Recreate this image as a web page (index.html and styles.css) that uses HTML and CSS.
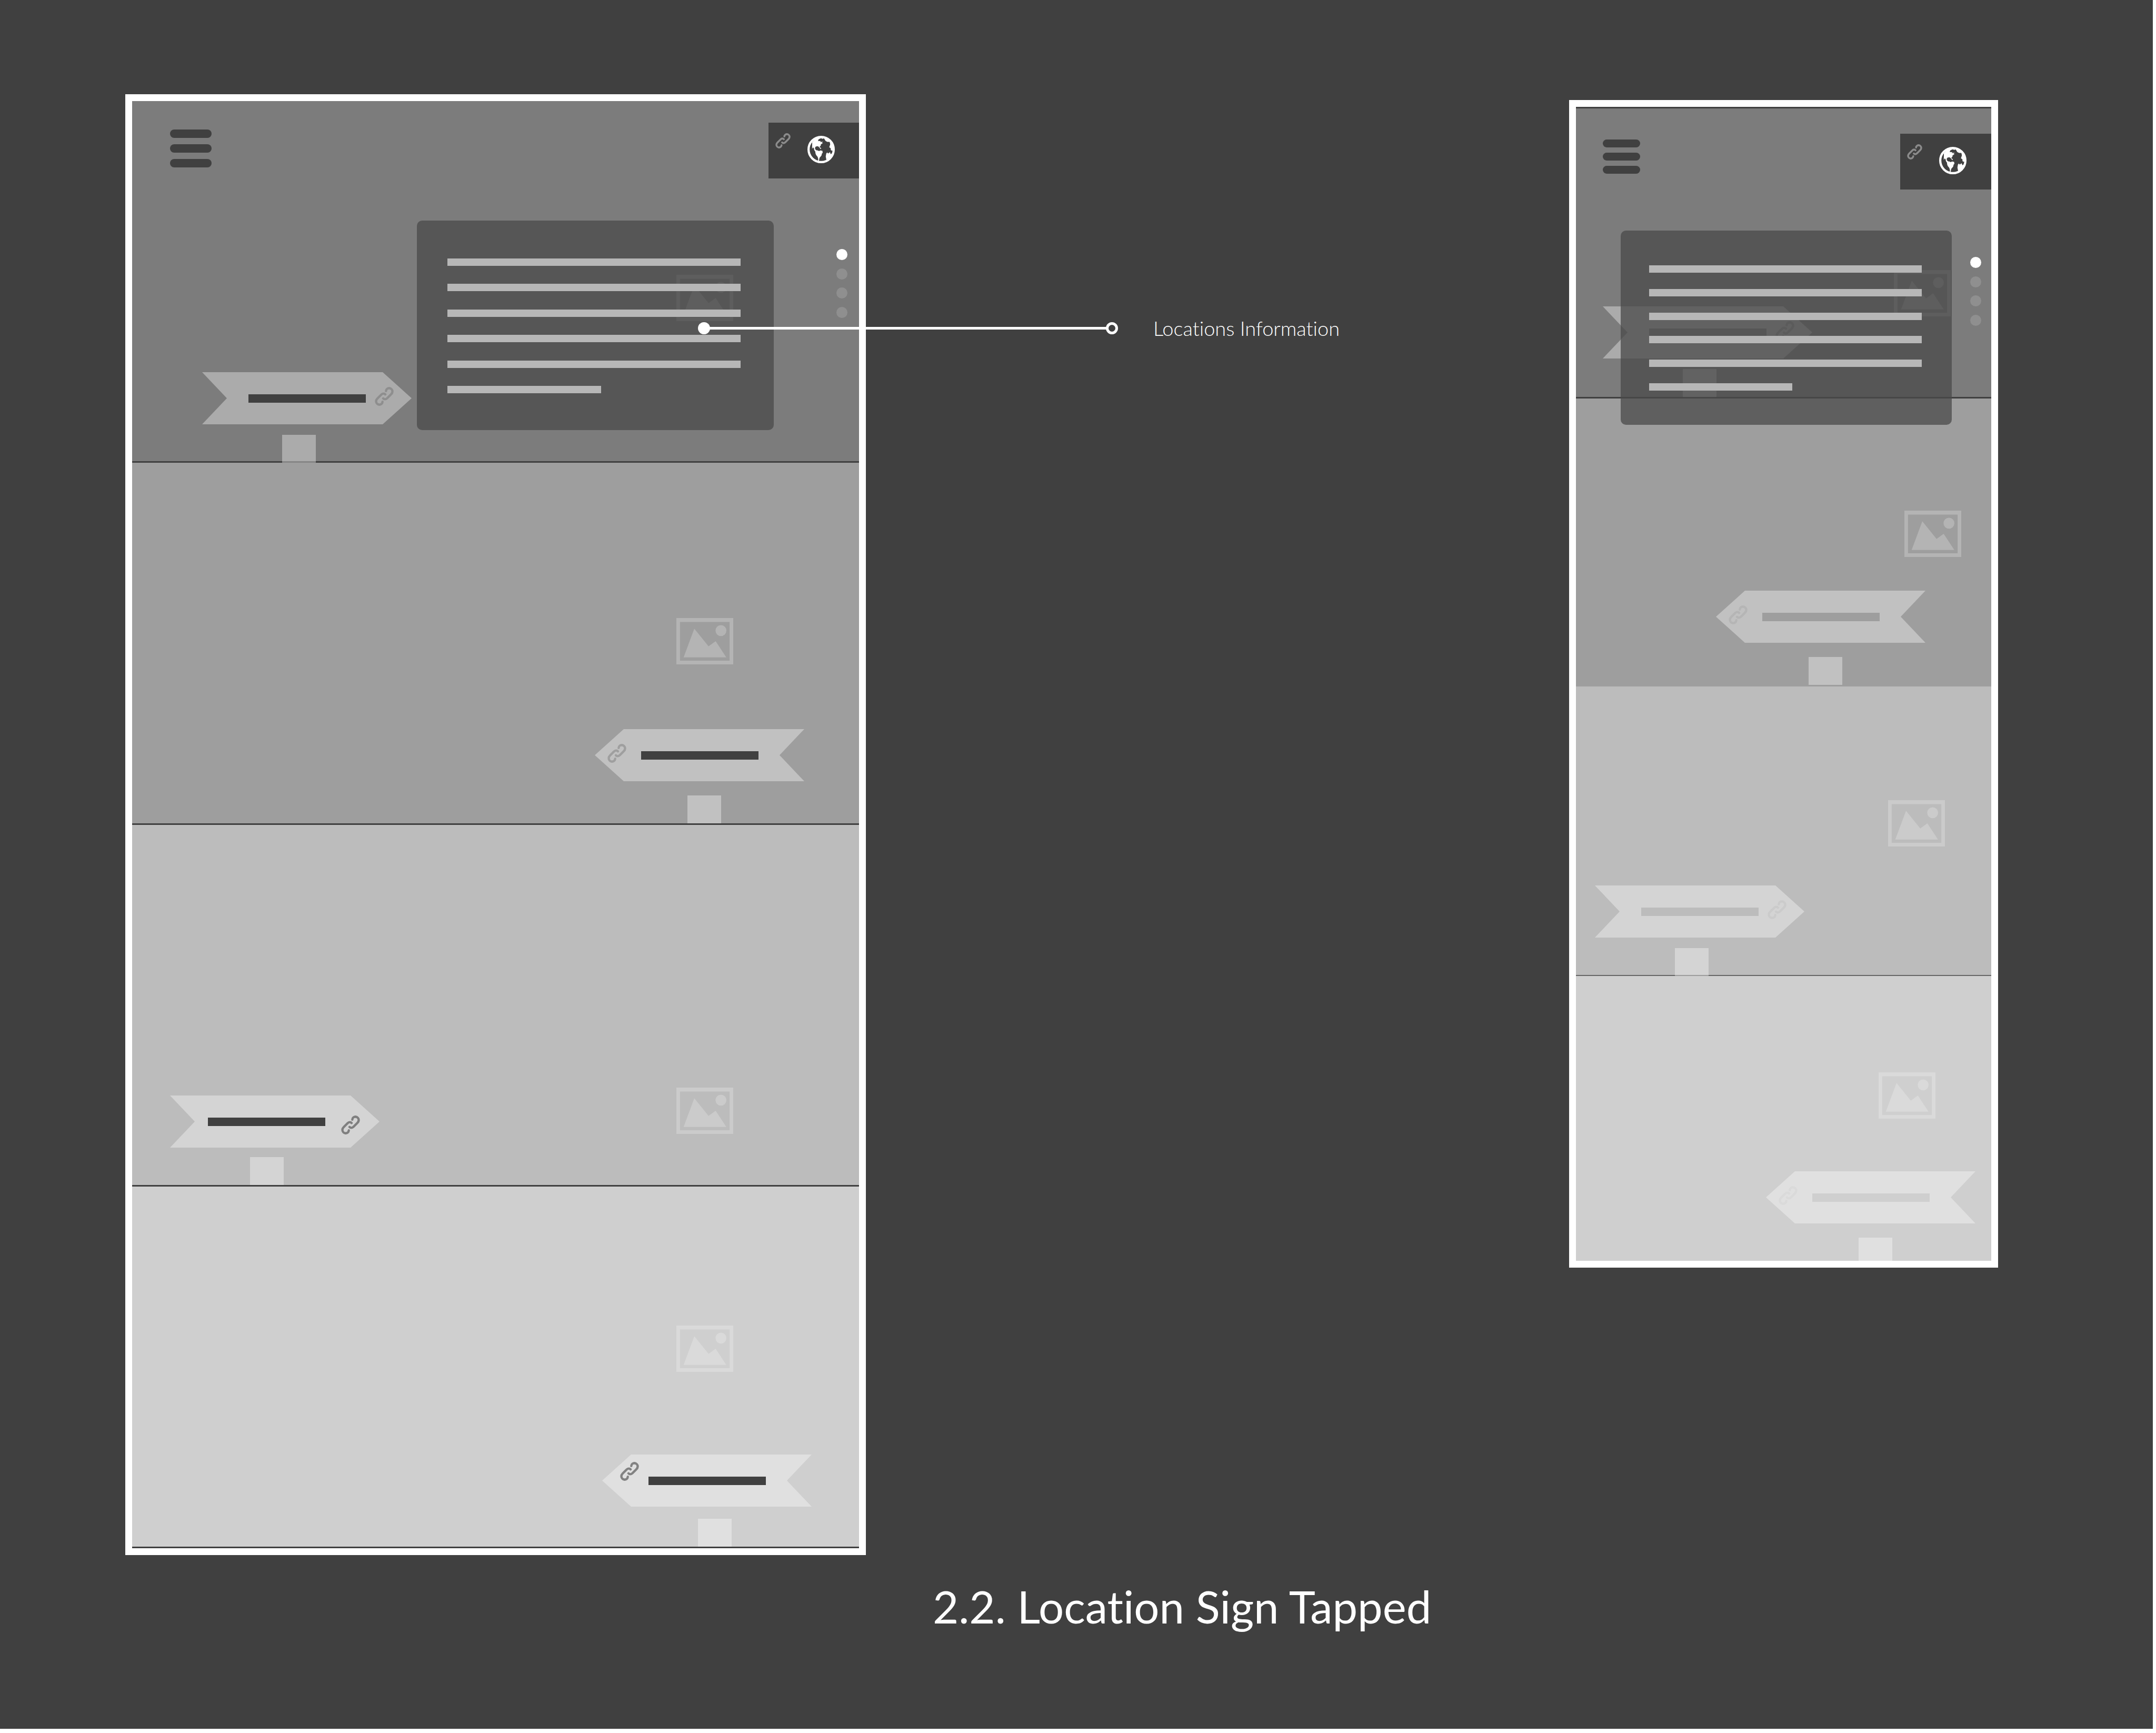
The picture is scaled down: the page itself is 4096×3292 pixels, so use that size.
FILE: index.html
```html
<!DOCTYPE html>
<html lang="en">
<head>
<meta charset="utf-8">
<title>2.2. Location Sign Tapped</title>
<link rel="stylesheet" href="styles.css">
</head>
<body>
<svg class="symbols" aria-hidden="true">
  <symbol id="link" viewBox="0 0 36 36">
    <path d="M21.3 7.8C21.5 4 25 2.3 27.5 2.3 31 2.8 33.7 5.5 33.5 9 33.4 11 32.5 12.5 31 14L23.5 21.5C21 24 18 24 16 21.8M14.7 28.2C14.5 32 11 33.7 8.5 33.7 5 33.2 2.3 30.5 2.5 27 2.6 25 3.5 23.5 5 22L12.5 14.5C15 12 18 12 20 14.2" fill="none" stroke="currentColor" stroke-width="4.4" stroke-linecap="round" stroke-linejoin="round"/>
  </symbol>
  <symbol id="picture" viewBox="0 0 118 96">
    <path fill="currentColor" fill-rule="evenodd" d="M0 0H118V96H0ZM7.500 8V88.500H110.500V8Z"/>
    <path fill="currentColor" d="M15 81.700 37.200 22 66.800 58.700 81.500 48 103.600 81.700Z"/>
    <circle fill="currentColor" cx="92.500" cy="26" r="11.300"/>
  </symbol>
  <symbol id="globe" viewBox="0 0 172 172">
    <circle cx="86" cy="86" r="79" fill="none" stroke="currentColor" stroke-width="14"/>
    <path fill="currentColor" d="M30 40 29 82 35 73 40 77 43 90 50 100 54 108 58 96 66 92 58 92 50 86 47 76 52 68 62 65 70 68 78 78 84 84 86 78 76 70 84 60 84 54 97 46 90 44 98 37 79 39 84 33 66 32 70 22 78 18 86 15 94 19 104 16 108 22 114 32 125 38 140 38 143 54 137 72 146 78 147 90 156 94 162 86 155 50 130 20 86 8 50 20Z"/>
    <path fill="currentColor" d="M50 98 62 92 74 96 80 92 94 94 96 106 91 112 88 124 76 138 72 158 66 158 68 146 64 132 54 120 50 108Z"/>
    <path fill="currentColor" d="M118 112 124 104 130 112 136 106 142 103 146 116 154 110 160 112 150 136 124 156 118 146 115 130Z"/>
  </symbol>
</svg>

<main class="board">
  <section class="device device--tablet" aria-label="Tablet layout">
    <div class="band band--1" id="t1">
      <button class="menu" type="button" aria-label="Menu"><span></span><span></span><span></span></button>
      <button class="language" type="button" aria-label="Language"><svg class="link-icon"><use href="#link"/></svg><svg class="globe"><use href="#globe"/></svg></button>
      <svg class="picture"><use href="#picture"/></svg>
      <div class="signpost signpost--right">
        <a class="sign" href="#info" aria-label="Location one"><span class="name"></span><svg class="link-icon"><use href="#link"/></svg></a>
        <div class="post"></div>
      </div>
      <article class="info" id="info" aria-label="Locations information"><span></span><span></span><span></span><span></span><span></span><span></span></article>
      <nav class="dots" aria-label="Locations"><a href="#t1" aria-label="Location one" aria-current="true"></a><a href="#t2" aria-label="Location two"></a><a href="#t3" aria-label="Location three"></a><a href="#t4" aria-label="Location four"></a></nav>
    </div>
    <div class="band band--2" id="t2">
      <svg class="picture"><use href="#picture"/></svg>
      <div class="signpost signpost--left">
        <a class="sign" href="#info" aria-label="Location two"><svg class="link-icon"><use href="#link"/></svg><span class="name"></span></a>
        <div class="post"></div>
      </div>
    </div>
    <div class="band band--3" id="t3">
      <svg class="picture"><use href="#picture"/></svg>
      <div class="signpost signpost--right">
        <a class="sign" href="#info" aria-label="Location three"><span class="name"></span><svg class="link-icon"><use href="#link"/></svg></a>
        <div class="post"></div>
      </div>
    </div>
    <div class="band band--4" id="t4">
      <svg class="picture"><use href="#picture"/></svg>
      <div class="signpost signpost--left">
        <a class="sign" href="#info" aria-label="Location four"><svg class="link-icon"><use href="#link"/></svg><span class="name"></span></a>
        <div class="post"></div>
      </div>
    </div>
  </section>

  <aside class="notes">
    <div class="callout">
      <span class="callout-dot"></span><span class="callout-line"></span><span class="callout-ring"></span>
      <p class="callout-label">Locations Information</p>
    </div>
  </aside>

  <section class="device device--phone" aria-label="Phone layout">
    <div class="band band--1" id="p1">
      <button class="menu" type="button" aria-label="Menu"><span></span><span></span><span></span></button>
      <button class="language" type="button" aria-label="Language"><svg class="link-icon"><use href="#link"/></svg><svg class="globe"><use href="#globe"/></svg></button>
      <svg class="picture"><use href="#picture"/></svg>
      <div class="signpost signpost--right">
        <a class="sign" href="#info-phone" aria-label="Location one"><span class="name"></span><svg class="link-icon"><use href="#link"/></svg></a>
        <div class="post"></div>
      </div>
      <article class="info" id="info-phone" aria-label="Locations information"><span></span><span></span><span></span><span></span><span></span><span></span></article>
      <nav class="dots" aria-label="Locations"><a href="#p1" aria-label="Location one" aria-current="true"></a><a href="#p2" aria-label="Location two"></a><a href="#p3" aria-label="Location three"></a><a href="#p4" aria-label="Location four"></a></nav>
    </div>
    <div class="band band--2" id="p2">
      <svg class="picture"><use href="#picture"/></svg>
      <div class="signpost signpost--left">
        <a class="sign" href="#info-phone" aria-label="Location two"><svg class="link-icon"><use href="#link"/></svg><span class="name"></span></a>
        <div class="post"></div>
      </div>
    </div>
    <div class="band band--3" id="p3">
      <svg class="picture"><use href="#picture"/></svg>
      <div class="signpost signpost--right">
        <a class="sign" href="#info-phone" aria-label="Location three"><span class="name"></span><svg class="link-icon"><use href="#link"/></svg></a>
        <div class="post"></div>
      </div>
    </div>
    <div class="band band--4" id="p4">
      <svg class="picture"><use href="#picture"/></svg>
      <div class="signpost signpost--left">
        <a class="sign" href="#info-phone" aria-label="Location four"><svg class="link-icon"><use href="#link"/></svg><span class="name"></span></a>
        <div class="post"></div>
      </div>
    </div>
  </section>

  <h1 class="title">2.2. Location Sign Tapped</h1>
</main>
</body>
</html>
```
FILE: styles.css
```css
:root {
  --ink: #404040;
  --text-line: #b7b7b7;
  --sign: rgba(255, 255, 255, .36);
}

* { box-sizing: border-box; }

body {
  margin: 0;
  background: #fff;
  color: #fff;
  font-family: Lato, "Liberation Sans", sans-serif;
  font-variant-ligatures: none;
}

.symbols { display: none; }

.board {
  display: grid;
  grid-template-columns: 1407fr 1336fr 815fr;
  grid-template-rows: auto 1fr;
  align-items: start;
  min-height: calc(100vh - 8px);
  margin: 0 6px 8px 0;
  padding: 179px 294px 0 238px;
  background: var(--ink);
}

/* Devices */

.device { border: 13px solid #fff; }

.device--phone { margin-top: 11px; }

.band {
  display: grid;
  grid-template: 100% / 100%;
  height: 687px;
  border-bottom: 3px solid var(--ink);
  background: var(--band);
}

.band > * { grid-area: 1 / 1; }

.band--1 { --band: #7c7c7c; --link: #8e8e8e; position: relative; z-index: 1; }
.band--2 { --band: #9e9e9e; --link: #9f9f9f; }
.band--3 { --band: #bcbcbc; --link: #7f7f7f; }
.band--4 { --band: #cfcfcf; --link: #828282; }

.device--tablet .band--2 { height: 688px; }

.device--phone .band--1 { height: 554px; border-top: 3px solid var(--ink); }
.device--phone .band--2 { --link: #b5b5b5; height: 547px; border: 0; }
.device--phone .band--3 { --link: #cbcbcb; height: 550px; border-bottom: 2px solid #666; }
.device--phone .band--4 { --link: #dadada; height: 541px; border: 0; overflow: hidden; }

/* Menu button */

.menu {
  display: grid;
  gap: 12px;
  align-self: start;
  justify-self: start;
  width: 79px;
  margin: 54px 0 0 72px;
  padding: 0;
  border: 0;
  background: none;
}

.menu span { height: 16px; border-radius: 8px; background: var(--ink); }

.device--phone .menu { gap: 10px; width: 71px; margin: 59px 0 0 51px; }
.device--phone .menu span { height: 15px; }

/* Language button */

.language {
  display: flex;
  align-items: flex-start;
  gap: 32px;
  align-self: start;
  justify-self: end;
  width: 172px;
  height: 106px;
  margin-top: 41px;
  padding: 20px 0 0 13px;
  border: 0;
  background: var(--ink);
  color: #fff;
}

.language .link-icon { width: 29px; height: 29px; color: #8b8b8b; }

.globe { width: 52px; height: 52px; margin-top: 5px; }

.device--phone .language { width: 173px; margin-top: 48px; }

/* Picture placeholder */

.picture {
  align-self: start;
  justify-self: end;
  width: 108px;
  height: 88px;
  color: rgba(255, 255, 255, .23);
}

.device--tablet .picture { margin-right: 239px; }
.device--tablet .band--1 .picture { margin-top: 330px; }
.device--tablet .band--2 .picture { margin-top: 295px; }
.device--tablet .band--3 .picture { margin-top: 499px; }
.device--tablet .band--4 .picture { margin-top: 264px; }

.device--phone .band--1 .picture { margin: 307px 77px 0 0; }
.device--phone .band--2 .picture { margin: 213px 57px 0 0; }
.device--phone .band--3 .picture { margin: 216px 88px 0 0; }
.device--phone .band--4 .picture { margin: 183px 106px 0 0; }

/* Signposts */

.signpost {
  display: grid;
  gap: 20px;
  align-self: end;
  width: 398px;
}

.signpost--right { justify-self: start; }
.signpost--left { justify-self: end; gap: 27px; }

.sign {
  display: flex;
  align-items: center;
  height: 99px;
  background: var(--sign);
}

.signpost--right .sign {
  gap: 17px;
  padding-left: 88px;
  clip-path: polygon(0 0, 343px 0, 100% 50%, 343px 100%, 0 100%, 47px 50%);
}

.signpost--left .sign {
  gap: 28px;
  padding-left: 24px;
  clip-path: polygon(100% 0, 55px 0, 0 50%, 55px 100%, 100% 100%, 351px 50%);
}

.name { width: 223px; height: 16px; background: var(--ink); }

.device--phone .name { background: var(--band); }

.sign .link-icon { width: 36px; height: 36px; margin-bottom: 7px; color: var(--link); }

.post { width: 64px; height: 53px; background: var(--sign); }

.signpost--right .post { margin-left: 152px; }
.signpost--left .post { margin-left: 176px; }

.device--tablet .band--1 .signpost { margin: 0 0 -3px 133px; }
.device--tablet .band--2 .signpost { margin-right: 104px; }
.device--tablet .band--3 .signpost { gap: 18px; margin-left: 72px; }
.device--tablet .band--4 .signpost { gap: 23px; margin-right: 90px; }

.device--tablet .band--3 .sign { gap: 30px; padding-left: 72px; }
.device--tablet .band--3 .sign .link-icon { margin: 13px 0 0; }
.device--tablet .band--4 .sign { gap: 18px; padding-left: 34px; }
.device--tablet .band--4 .sign .link-icon { margin-bottom: 36px; }
.device--tablet .band--4 .post { margin-left: 182px; }

.device--phone .band--1 .signpost { margin-left: 51px; }
.device--phone .band--2 .signpost { margin: 0 125px 3px 0; }
.device--phone .band--3 .signpost { margin: 0 0 -2px 36px; }
.device--phone .band--4 .signpost { margin: 0 30px -9px 0; }

/* Location information card */

.info {
  display: flex;
  flex-direction: column;
  justify-content: space-between;
  align-self: start;
  justify-self: end;
  z-index: 1;
  width: 678px;
  height: 398px;
  margin: 227px 162px 0 0;
  padding: 72px 63px 70px 58px;
  border-radius: 10px;
  background: rgba(74, 74, 74, .75);
}

.info span { height: 14px; background: var(--text-line); }
.info span:last-child { width: 292px; }

.device--phone .info {
  width: 629px;
  height: 369px;
  margin: 232px 75px 0 0;
  padding: 66px 57px 65px 54px;
}

.device--phone .info span:last-child { width: 272px; }

/* Page dots */

.dots {
  display: flex;
  flex-direction: column;
  justify-content: space-between;
  align-self: start;
  justify-self: end;
  height: 131px;
  margin: 281px 22px 0 0;
}

.dots a { width: 21px; height: 21px; border-radius: 50%; background: rgba(255, 255, 255, .15); }
.dots a[aria-current] { background: #fff; }

.device--phone .dots { margin: 282px 19px 0 0; }

/* Annotation */

.notes { position: relative; z-index: 2; }

.callout {
  display: flex;
  align-items: center;
  height: 64px;
  margin: 412px 0 0 -319px;
}

.callout-dot { width: 23px; height: 23px; border-radius: 50%; background: #fff; }
.callout-line { width: 754px; height: 5px; margin: 0 -1px; background: #fff; }
.callout-ring { width: 23px; height: 23px; border: 5px solid #fff; border-radius: 50%; }

.callout-label {
  margin: 0 0 0 67px;
  font-size: 38px;
  font-weight: 300;
  line-height: 64px;
  white-space: nowrap;
}

.title {
  grid-column: 2;
  margin: 49px 0 0 127px;
  font-size: 85px;
  font-weight: 400;
  line-height: 96px;
  white-space: nowrap;
}
```
